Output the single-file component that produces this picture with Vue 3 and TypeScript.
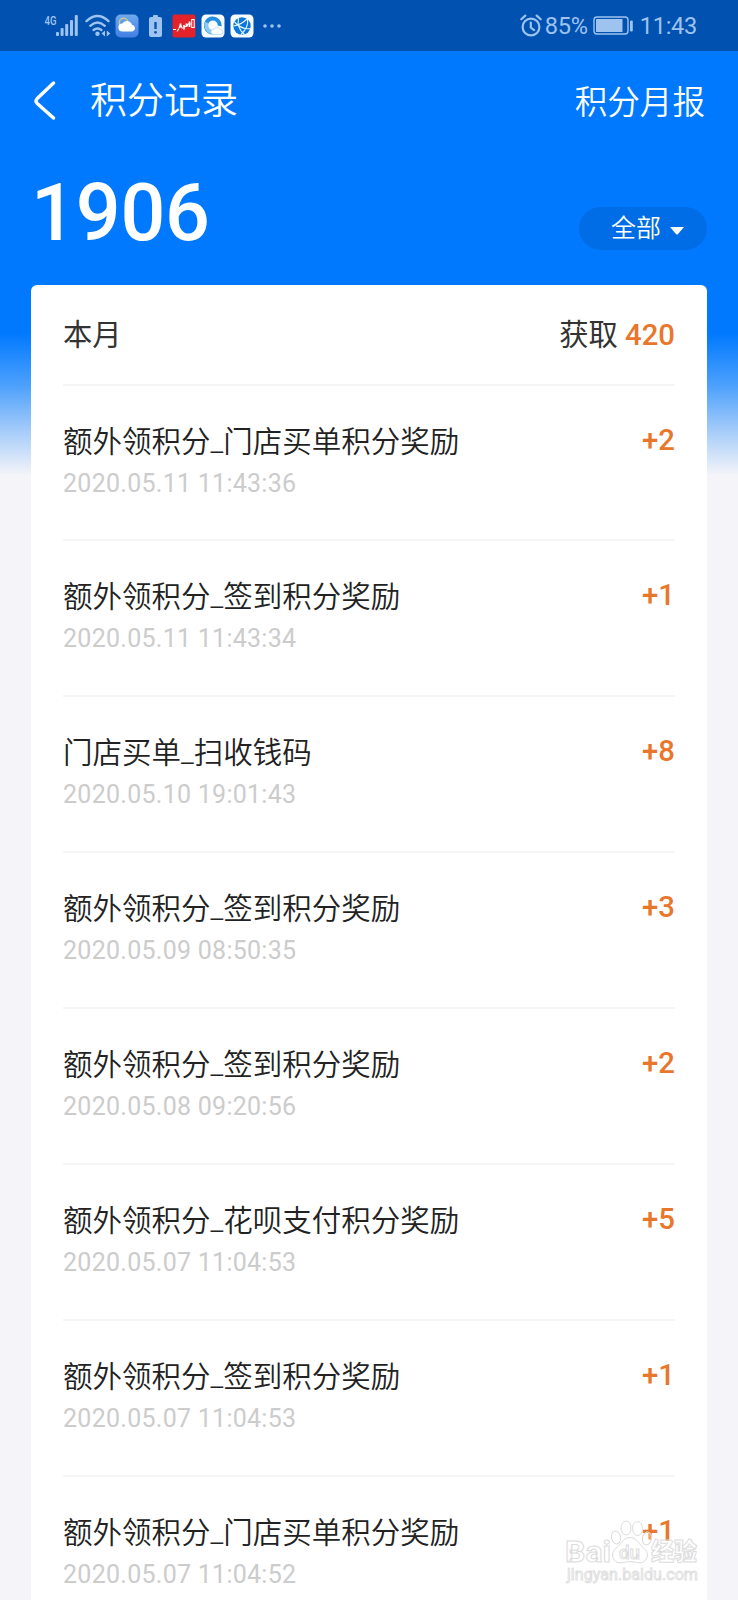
<script setup lang="ts">
interface PointRecord {
  title: string
  time: string
  points: number
}

const total = 1906
const gained = 420

const records: PointRecord[] = [
  { title: '额外领积分_门店买单积分奖励', time: '2020.05.11 11:43:36', points: 2 },
  { title: '额外领积分_签到积分奖励', time: '2020.05.11 11:43:34', points: 1 },
  { title: '门店买单_扫收钱码', time: '2020.05.10 19:01:43', points: 8 },
  { title: '额外领积分_签到积分奖励', time: '2020.05.09 08:50:35', points: 3 },
  { title: '额外领积分_签到积分奖励', time: '2020.05.08 09:20:56', points: 2 },
  { title: '额外领积分_花呗支付积分奖励', time: '2020.05.07 11:04:53', points: 5 },
  { title: '额外领积分_签到积分奖励', time: '2020.05.07 11:04:53', points: 1 },
  { title: '额外领积分_门店买单积分奖励', time: '2020.05.07 11:04:52', points: 1 },
]
</script>

<template>
  <div class="screen">
    <header class="status">
      <div class="status-left">
        <svg class="signal" width="36" height="24" viewBox="0 0 36 24">
          <text x="0.5" y="10.5" font-size="13" font-weight="500" textLength="12" lengthAdjust="spacingAndGlyphs">4G</text>
          <g>
            <rect x="12" y="18" width="3" height="4" rx="1" />
            <rect x="16.6" y="14" width="3" height="8" rx="1" />
            <rect x="21.2" y="10" width="3" height="12" rx="1" />
            <rect x="26" y="6" width="3" height="16" rx="1" />
            <rect x="30.8" y="1" width="3" height="21" rx="1" />
          </g>
        </svg>
        <svg class="wifi" width="26" height="24" viewBox="0 0 26 24">
          <g fill="none" stroke-width="2.4" stroke-linecap="round">
            <path d="M1.5 7.2Q12.5-3 23.5 7.2" />
            <path d="M5.2 11.8Q12.5 5.4 19.8 11.8" />
            <path d="M8.6 16Q12.5 12.8 16.4 16" />
          </g>
          <circle cx="12.5" cy="19.8" r="2.2" />
          <path d="M20 16.5v6l-3.5-3zM21.8 16.5v6l3.5-3z" />
        </svg>
        <svg class="app weather" width="24" height="24" viewBox="0 0 24 24">
          <defs>
            <linearGradient id="sky" x1="0" y1="0" x2="0" y2="1">
              <stop offset="0" stop-color="#6fa9ee" />
              <stop offset="1" stop-color="#3f7fe4" />
            </linearGradient>
          </defs>
          <rect x=".5" y=".5" width="23" height="23" rx="5" fill="url(#sky)" />
          <circle cx="8.5" cy="8.5" r="4.2" fill="none" stroke="#cfc58d" stroke-width="1.5" />
          <path d="M7.5 17.5a4 4 0 0 1-.2-8 5.3 5.3 0 0 1 9.6 1.2 3.5 3.5 0 0 1 .6 6.8z" fill="#fff" />
        </svg>
        <svg class="alert" width="13" height="24" viewBox="0 0 13 24">
          <rect x="4" y="1" width="5" height="3" rx="1" />
          <rect x="0" y="3" width="13" height="20" rx="2" />
          <path d="M6.5 8v7" stroke="#0954b3" stroke-width="2.4" />
          <circle cx="6.5" cy="18.3" r="1.4" fill="#0954b3" />
        </svg>
        <svg class="app stock" width="24" height="24" viewBox="0 0 24 24">
          <rect x=".5" y=".5" width="23" height="23" rx="2" fill="#e4222a" />
          <path d="M1 15.5h3M5 17.5l2-3M7 14l1.500-3 2 3.500M12 13l3-1 1-2h3" fill="none" stroke="#fff" stroke-width="1.2" />
          <path d="M8.500 9.500v4M12 11v4.500M14.500 9.500v3M17.500 7.500v5.500" stroke="#fff" stroke-width="1.7" />
          <rect x="19.700" y="5.500" width="2.500" height="8" fill="none" stroke="#fff" />
        </svg>
        <svg class="app" width="24" height="24" viewBox="0 0 24 24">
          <rect x=".5" y=".5" width="23" height="23" rx="4.5" fill="#f8fcff" />
          <path d="M14 18.200A7 7 0 1 1 18.800 12" fill="none" stroke="#248ee0" stroke-width="4" />
          <path d="M5.800 8.500a7 7 0 0 0 4.500 9.500" fill="none" stroke="#8ccaf4" stroke-width="4" />
          <path d="M12.500 20.500a2.600 2.600 0 0 1 .3-5.200 3.800 3.800 0 0 1 6.600.3 2.500 2.500 0 0 1 .6 4.900z" fill="#fff" stroke="#b5dcf5" stroke-width=".8" />
        </svg>
        <svg class="app" width="24" height="24" viewBox="0 0 24 24">
          <rect x=".5" y=".5" width="23" height="23" rx="4.5" fill="#f8fcff" />
          <circle cx="12" cy="12" r="8.7" fill="#0b77da" />
          <g fill="none" stroke="#e6f5ff" stroke-width="1.1">
            <path d="M3.500 12Q11 11 17 5M8.500 4Q6.500 14 14.500 20.500M4.500 8Q12 16 20.500 14.500M17.500 5Q19 13 11 20.500" />
          </g>
        </svg>
        <svg class="more" width="18" height="24" viewBox="0 0 18 24">
          <circle cx="2" cy="12" r="1.8" />
          <circle cx="9" cy="12" r="1.8" />
          <circle cx="16" cy="12" r="1.8" />
        </svg>
      </div>
      <div class="status-right">
        <svg class="alarm" width="22" height="24" viewBox="0 0 22 24">
          <g fill="none" stroke-width="2.2" stroke-linecap="round">
            <circle cx="11" cy="13" r="8.4" />
            <path d="M10.8 8.5v5l3.3 2.6M1.3 5.2l4-3.6M20.7 5.2l-4-3.6" />
          </g>
        </svg>
        <span class="percent">85%</span>
        <svg class="battery" width="41" height="20" viewBox="0 0 41 20">
          <rect x="1" y="1" width="34" height="17" rx="3" fill="none" stroke-width="1.4" />
          <rect x="3" y="3" width="26.5" height="13" rx=".5" />
          <rect x="37" y="4.5" width="2.8" height="11" rx="1" />
        </svg>
        <span class="clock">11:43</span>
      </div>
    </header>

    <section class="hero">
      <nav class="nav">
        <svg class="back" width="24" height="42" viewBox="0 0 24 42">
          <path d="M20.5 3 4 18.8q-2 2.2 0 4.4L20.5 38" />
        </svg>
        <h1>积分记录</h1>
        <a class="report">积分月报</a>
      </nav>
      <div class="summary">
        <strong class="total">{{ total }}</strong>
        <button class="filter" type="button">
          <span>全部</span>
          <svg width="14" height="8" viewBox="0 0 14 8"><path d="M0 0h14L7.8 7.2q-.8.8-1.6 0z" /></svg>
        </button>
      </div>
    </section>

    <main class="card">
      <div class="month">
        <span>本月</span>
        <span>获取 <b>{{ gained }}</b></span>
      </div>
      <ul class="list">
        <li v-for="(record, index) in records" :key="index" class="row">
          <div class="detail">
            <p class="title">{{ record.title }}</p>
            <p class="time">{{ record.time }}</p>
          </div>
          <b class="points">+{{ record.points }}</b>
        </li>
      </ul>
    </main>

    <svg class="watermark" width="140" height="68" viewBox="0 0 140 68">
      <g class="mark">
        <text x="3" y="41.500" font-size="30" font-weight="700" textLength="46" lengthAdjust="spacingAndGlyphs">Bai</text>
        <ellipse cx="54" cy="17.500" rx="4.600" ry="6.500" transform="rotate(-12 54 17.500)" />
        <ellipse cx="64" cy="8" rx="5" ry="7" />
        <ellipse cx="75.500" cy="8.500" rx="5" ry="7" />
        <ellipse cx="85" cy="18.500" rx="4.600" ry="6.500" transform="rotate(12 85 18.500)" />
        <path d="M68 17.500c6 0 8 5 12 9 5 4 7 8 4 13-4 6-10 2-16 2s-12 4-16-2c-3-5-1-9 4-13 4-4 6-9 12-9z" />
        <text x="57" y="38.500" font-size="19" font-weight="500" textLength="21" lengthAdjust="spacingAndGlyphs">du</text>
        <text x="89" y="40" font-size="24" font-weight="900" textLength="46" lengthAdjust="spacingAndGlyphs">经验</text>
      </g>
      <text class="site" x="5" y="60" font-size="16.500" textLength="131" lengthAdjust="spacingAndGlyphs">jingyan.baidu.com</text>
    </svg>
  </div>
</template>

<style>
html,
body {
  margin: 0;
  overflow: hidden;
}
</style>

<style scoped>
.screen {
  position: relative;
  width: 738px;
  height: 1600px;
  overflow: hidden;
  font-family: Roboto, "Noto Sans CJK SC", sans-serif;
  background: linear-gradient(#0079ff 0, #0079ff 333px, #4ca0fc 385px, #a3cbf9 430px, #f4f4f9 475px);
}

.status {
  box-sizing: border-box;
  height: 51px;
  padding: 0 41px 0 44px;
  display: flex;
  align-items: center;
  justify-content: space-between;
  background: #0051b0;
  color: #9dc3ee;
  fill: #9dc3ee;
  stroke: none;
}

.status-left,
.status-right {
  display: flex;
  align-items: center;
}

.status svg {
  flex: none;
}

.wifi {
  margin-left: 5px;
}

.wifi g,
.alarm g,
.battery rect:first-child {
  stroke: #9dc3ee;
}

.weather {
  margin-left: 4px;
}

.alert {
  margin: 0 10px;
}

.app + .app {
  margin-left: 5px;
}

.more {
  margin-left: 9px;
}

.percent,
.clock {
  font-size: 23.6px;
  line-height: 52px;
  letter-spacing: -0.3px;
}

.percent {
  width: 43px;
  margin-left: 3px;
}

.battery {
  margin-left: 5px;
}

.clock {
  margin-left: 6px;
}

.hero {
  height: 234px;
  color: #fff;
}

.nav {
  display: flex;
  height: 100px;
  padding: 0 33px;
  align-items: center;
}

.back {
  fill: none;
  stroke: #fff;
  stroke-width: 3.4;
  stroke-linecap: round;
}

h1 {
  margin: 2px auto 0 33px;
  font-size: 37px;
  font-weight: 350;
  line-height: 54px;
}

.report {
  margin-top: 4px;
  font-size: 32.6px;
  font-weight: 350;
  line-height: 50px;
}

.summary {
  display: flex;
  justify-content: space-between;
  align-items: flex-start;
  padding: 0 31px;
}

.total {
  margin-top: 14px;
  font-size: 79px;
  font-weight: 500;
  line-height: 96px;
  letter-spacing: -0.2px;
}

.filter {
  display: flex;
  align-items: center;
  width: 128px;
  height: 43px;
  margin: 56px 0 0;
  padding: 0 0 0 32px;
  gap: 9px;
  border: 0;
  border-radius: 22px;
  background: #006de6;
  color: #fff;
  font: 350 25px/40px Roboto, "Noto Sans CJK SC", sans-serif;
}

.filter svg {
  margin-top: 5px;
  fill: #fff;
}

.card {
  height: 1400px;
  margin: 0 31px 0 30.5px;
  padding: 0 32px 0 32.5px;
  border-radius: 6px 6px 0 0;
  background: #fff;
}

.month {
  box-sizing: border-box;
  display: flex;
  justify-content: space-between;
  height: 100.5px;
  padding-top: 28px;
  border-bottom: 2px solid #f5f5f5;
  color: #333;
  font-size: 29.3px;
  line-height: 44px;
}

.month b,
.points {
  color: #e8772c;
  font-weight: 500;
}

.list {
  margin: 0;
  padding: 0;
  list-style: none;
}

.row {
  box-sizing: border-box;
  display: flex;
  justify-content: space-between;
  height: 155.95px;
  padding-top: 34px;
  border-bottom: 2px solid #f5f5f5;
}

.title,
.time {
  margin: 0;
}

.title {
  color: #222;
  font-size: 29.5px;
  font-weight: 350;
  line-height: 44px;
}

.time {
  color: #ccc;
  font-size: 25px;
  line-height: 40px;
  letter-spacing: 0.27px;
}

.points {
  font-size: 29.3px;
  line-height: 40px;
}

.watermark {
  position: absolute;
  left: 562px;
  top: 1520px;
}

.mark {
  fill: rgba(255, 255, 255, 0.3);
  stroke: #dcdcdc;
  stroke-width: 1;
}

.site {
  fill: #fff;
  stroke: #dedede;
  stroke-width: 0.9;
}
</style>
